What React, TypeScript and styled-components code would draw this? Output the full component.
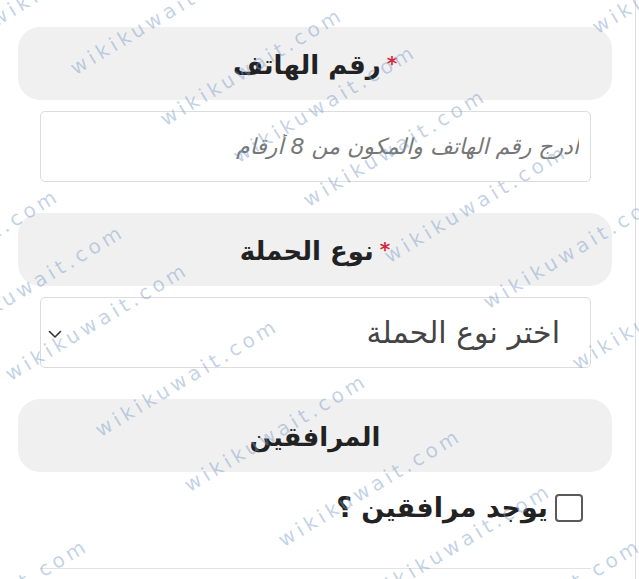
import React from "react";
import styled, { createGlobalStyle } from "styled-components";

const Global = createGlobalStyle`
  html, body { margin: 0; padding: 0; background: #ffffff; }
  body { font-family: "DejaVu Sans", "Noto Sans", sans-serif; }
  * { box-sizing: border-box; }
`;

const Page = styled.div`
  position: relative;
  width: 639px;
  height: 579px;
  overflow: hidden;
  background: #ffffff;
`;

const Panel = styled.div`
  direction: rtl;
  width: 636px;
  height: 100%;
  border-right: 1px solid #dedede;
  padding: 27px 23px 0 18px;
  display: flex;
  flex-direction: column;
  gap: 31px;
`;

const Field = styled.div`
  display: flex;
  flex-direction: column;
  gap: 11px;
`;

const Header = styled.div`
  height: 73px;
  border-radius: 22px;
  background: #f0f0f0;
  display: flex;
  align-items: center;
  justify-content: center;
  gap: 6px;
  padding-top: 3px;
  font-family: "DejaVu Sans", sans-serif;
  font-weight: 700;
  font-size: 26px;
  color: #222222;
`;

const Star = styled.span`
  color: #d6283c;
  font-size: 20px;
  align-self: center;
  margin-top: -5px;
`;

const TextInput = styled.input`
  height: 71px;
  margin: 0 21px 0 22px;
  border: 1px solid #dcdcdc;
  border-radius: 5px;
  padding: 0 11px 0 11px;
  direction: rtl;
  background: #ffffff;
  font-family: "DejaVu Sans", sans-serif;
  font-size: 22px;
  outline: none;
  &::placeholder {
    color: #777777;
    font-style: italic;
  }
`;

const SelectWrap = styled.div`
  position: relative;
  height: 71px;
  margin: 0 21px 0 22px;
`;

const Select = styled.select`
  appearance: none;
  -webkit-appearance: none;
  width: 100%;
  height: 100%;
  border: 1px solid #dcdcdc;
  border-radius: 5px;
  padding: 0 30px 0 40px;
  direction: rtl;
  background: #ffffff;
  font-family: "DejaVu Sans", sans-serif;
  font-size: 30px;
  color: #444444;
  outline: none;
`;

const Chevron = styled.svg`
  position: absolute;
  left: 8px;
  top: 50%;
  margin-top: -3px;
  width: 14px;
  height: 9px;
  pointer-events: none;
`;

const CheckRow = styled.label`
  display: flex;
  align-items: center;
  gap: 7px;
  margin: 9px 29px 0 0;
  font-family: "DejaVu Sans", sans-serif;
  font-weight: 700;
  font-size: 27px;
  color: #222222;
`;

const Box = styled.input`
  appearance: none;
  -webkit-appearance: none;
  width: 28px;
  height: 28px;
  margin: 0;
  border: 2px solid #5a5a5a;
  border-radius: 4px;
  background: #ffffff;
`;

const Rule = styled.div`
  height: 1px;
  margin: 34px 21px 0 22px;
  background: #e3e3e3;
`;

const Marks = styled.div`
  position: absolute;
  inset: 0;
  pointer-events: none;
  z-index: 5;
`;

const Mark = styled.span`
  position: absolute;
  height: 20px;
  line-height: 20px;
  white-space: nowrap;
  transform-origin: 0 100%;
  transform: rotate(-31deg);
  font-family: "DejaVu Sans", sans-serif;
  font-size: 20px;
  letter-spacing: 4px;
  color: rgba(120, 155, 200, 0.45);
`;

const marks: [number, number][] = [
  [-3, 30], [77, 78], [167, 129], [240, 166], [310, 210], [391, 266], [490, 312], [579, 373],
  [-117, 310], [-52, 346], [12, 384], [102, 440], [191, 495], [285, 550], [375, 605], [465, 660],
  [599, 37], [-88, 660],
];

export default function App() {
  return (
    <Page>
      <Global />
      <Panel dir="rtl">
        <Field>
          <Header>
            <Star>*</Star>
            <span>رقم الهاتف</span>
          </Header>
          <TextInput type="text" placeholder="ادرج رقم الهاتف والمكون من 8 أرقام" />
        </Field>
        <Field>
          <Header>
            <Star>*</Star>
            <span>نوع الحملة</span>
          </Header>
          <SelectWrap>
            <Select defaultValue="">
              <option value="">اختر نوع الحملة</option>
            </Select>
            <Chevron viewBox="0 0 14 9">
              <path d="M1.5 1.5 L7 7 L12.5 1.5" fill="none" stroke="#333" strokeWidth="1.6" strokeLinecap="round" strokeLinejoin="round" />
            </Chevron>
          </SelectWrap>
        </Field>
        <Field>
          <Header>
            <span>المرافقين</span>
          </Header>
          <CheckRow>
            <Box type="checkbox" />
            <span>يوجد مرافقين ؟</span>
          </CheckRow>
          <Rule />
        </Field>
      </Panel>
      <Marks>
        {marks.map(([x, y], i) => (
          <Mark key={i} style={{ left: x, top: y - 20 }}>
            wikikuwait.com
          </Mark>
        ))}
      </Marks>
    </Page>
  );
}
